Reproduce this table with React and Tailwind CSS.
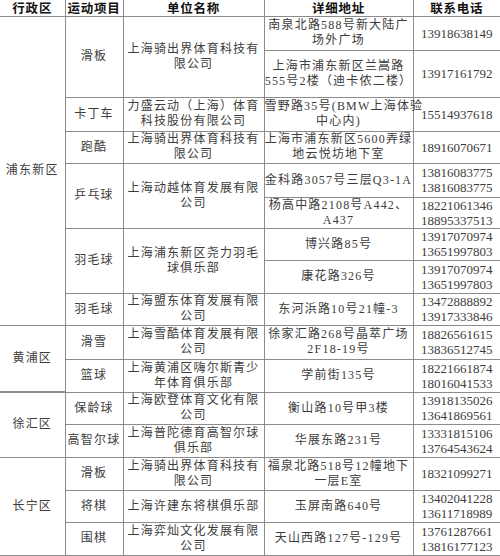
import React from "react";

const td = "border border-[#8c8c8c] p-0 text-center align-middle";
const body = "font-['Liberation_Serif','Noto_Sans_CJK_SC',serif] text-[12px] leading-[15px] tracking-[1.2px] text-[#3c3c3c]";
const phone = "font-['Liberation_Serif',serif] text-[13px] leading-[15px] text-[#3c3c3c]";
const head = "font-['Noto_Sans_CJK_SC',sans-serif] text-[12.5px] leading-[14px] font-bold tracking-[0.8px] text-[#111] pt-px";

const Lines = ({ lines }) =>
	lines.map((l, i) => (
		<div key={i} className="whitespace-nowrap">
			{l}
		</div>
	));

const C = ({ lines, rows, cls = "", kind = "body" }) => (
	<td rowSpan={rows} className={`${td} ${kind === "phone" ? phone : body} ${cls}`}>
		<Lines lines={lines} />
	</td>
);

export default function App() {
	return (
		<div className="w-[500px] h-[556px] bg-white overflow-hidden">
			<table className="w-[500px] table-fixed border-collapse">
				<colgroup>
					<col className="w-[65px]" />
					<col className="w-[58px]" />
					<col className="w-[141px]" />
					<col className="w-[149px]" />
					<col className="w-[87px]" />
				</colgroup>
				<tbody>
					<tr className="h-[16px]">
						<td className={`${td} ${head} border-t-0 border-l-0`}>行政区</td>
						<td className={`${td} ${head} border-t-0 tracking-[0.3px]`}>运动项目</td>
						<td className={`${td} ${head} border-t-0`}>单位名称</td>
						<td className={`${td} ${head} border-t-0`}>详细地址</td>
						<td className={`${td} ${head} border-t-0 border-r-0`}>联系电话</td>
					</tr>

					{/* 浦东新区 */}
					<tr className="h-[34px]">
						<C rows={9} lines={["浦东新区"]} cls="border-l-0" />
						<C rows={2} lines={["滑板"]} />
						<C rows={2} lines={["上海骑出界体育科技有", "限公司"]} />
						<C lines={["南泉北路588号新大陆广", "场外广场"]} cls="tracking-[0.8px]" />
						<C kind="phone" lines={["13918638149"]} cls="border-r-0" />
					</tr>
					<tr className="h-[47px]">
						<C lines={["上海市浦东新区兰嵩路", "555号2楼（迪卡侬二楼）"]} cls="tracking-[0.2px]" />
						<C kind="phone" lines={["13917161792"]} cls="border-r-0" />
					</tr>
					<tr className="h-[34px]">
						<C lines={["卡丁车"]} />
						<C lines={["力盛云动（上海）体育", "科技股份有限公司"]} />
						<C lines={["雪野路35号(BMW上海体验", "中心内)"]} cls="tracking-[0px] text-[11.5px]" />
						<C kind="phone" lines={["15514937618"]} cls="border-r-0" />
					</tr>
					<tr className="h-[32px]">
						<C lines={["跑酷"]} />
						<C lines={["上海骑出界体育科技有", "限公司"]} />
						<C lines={["上海市浦东新区5600弄绿", "地云悦坊地下室"]} cls="tracking-[0px]" />
						<C kind="phone" lines={["18916070671"]} cls="border-r-0" />
					</tr>
					<tr className="h-[34px]">
						<C rows={2} lines={["乒乓球"]} />
						<C rows={2} lines={["上海动越体育发展有限", "公司"]} />
						<C lines={["金科路3057号三层Q3-1A"]} cls="tracking-[0.3px]" />
						<C kind="phone" lines={["13816083775", "13816083775"]} cls="border-r-0" />
					</tr>
					<tr className="h-[31px]">
						<C lines={["杨高中路2108号A442、", "A437"]} cls="tracking-[0.6px]" />
						<C kind="phone" lines={["18221061346", "18895337513"]} cls="border-r-0" />
					</tr>
					<tr className="h-[32px]">
						<C rows={2} lines={["羽毛球"]} />
						<C rows={2} lines={["上海浦东新区尧力羽毛", "球俱乐部"]} />
						<C lines={["博兴路85号"]} />
						<C kind="phone" lines={["13917070974", "13651997803"]} cls="border-r-0" />
					</tr>
					<tr className="h-[33px]">
						<C lines={["康花路326号"]} />
						<C kind="phone" lines={["13917070974", "13651997803"]} cls="border-r-0" />
					</tr>
					<tr className="h-[32px]">
						<C lines={["羽毛球"]} />
						<C lines={["上海盟东体育发展有限", "公司"]} />
						<C lines={["东河浜路10号21幢-3"]} />
						<C kind="phone" lines={["13472888892", "13917333846"]} cls="border-r-0" />
					</tr>

					{/* 黄浦区 */}
					<tr className="h-[34px]">
						<C rows={2} lines={["黄浦区"]} cls="border-l-0" />
						<C lines={["滑雪"]} />
						<C lines={["上海雪酷体育发展有限", "公司"]} />
						<C lines={["徐家汇路268号晶萃广场", "2F18-19号"]} cls="tracking-[0.5px]" />
						<C kind="phone" lines={["18826561615", "13836512745"]} cls="border-r-0" />
					</tr>
					<tr className="h-[33px]">
						<C lines={["篮球"]} />
						<C lines={["上海黄浦区嗨尔斯青少", "年体育俱乐部"]} />
						<C lines={["学前街135号"]} />
						<C kind="phone" lines={["18221661874", "18016041533"]} cls="border-r-0" />
					</tr>

					{/* 徐汇区 */}
					<tr className="h-[32px]">
						<C rows={2} lines={["徐汇区"]} cls="border-l-0 border-t-2" />
						<C lines={["保龄球"]} />
						<C lines={["上海欧登体育文化有限", "公司"]} />
						<C lines={["衡山路10号甲3楼"]} />
						<C kind="phone" lines={["13918135026", "13641869561"]} cls="border-r-0" />
					</tr>
					<tr className="h-[33px]">
						<C lines={["高智尔球"]} cls="tracking-[0.5px]" />
						<C lines={["上海普陀德育高智尔球", "俱乐部"]} />
						<C lines={["华展东路231号"]} />
						<C kind="phone" lines={["13331815106", "13764543624"]} cls="border-r-0" />
					</tr>

					{/* 长宁区 */}
					<tr className="h-[33px]">
						<C rows={3} lines={["长宁区"]} cls="border-l-0" />
						<C lines={["滑板"]} />
						<C lines={["上海骑出界体育科技有", "限公司"]} />
						<C lines={["福泉北路518号12幢地下", "一层E室"]} cls="tracking-[0.5px]" />
						<C kind="phone" lines={["18321099271"]} cls="border-r-0" />
					</tr>
					<tr className="h-[32px]">
						<C lines={["将棋"]} />
						<C lines={["上海许建东将棋俱乐部"]} />
						<C lines={["玉屏南路640号"]} />
						<C kind="phone" lines={["13402041228", "13611718989"]} cls="border-r-0" />
					</tr>
					<tr className="h-[33px]">
						<C lines={["围棋"]} />
						<C lines={["上海弈灿文化发展有限", "公司"]} />
						<C lines={["天山西路127号-129号"]} />
						<C kind="phone" lines={["13761287661", "13816177123"]} cls="border-r-0" />
					</tr>
				</tbody>
			</table>
		</div>
	);
}
